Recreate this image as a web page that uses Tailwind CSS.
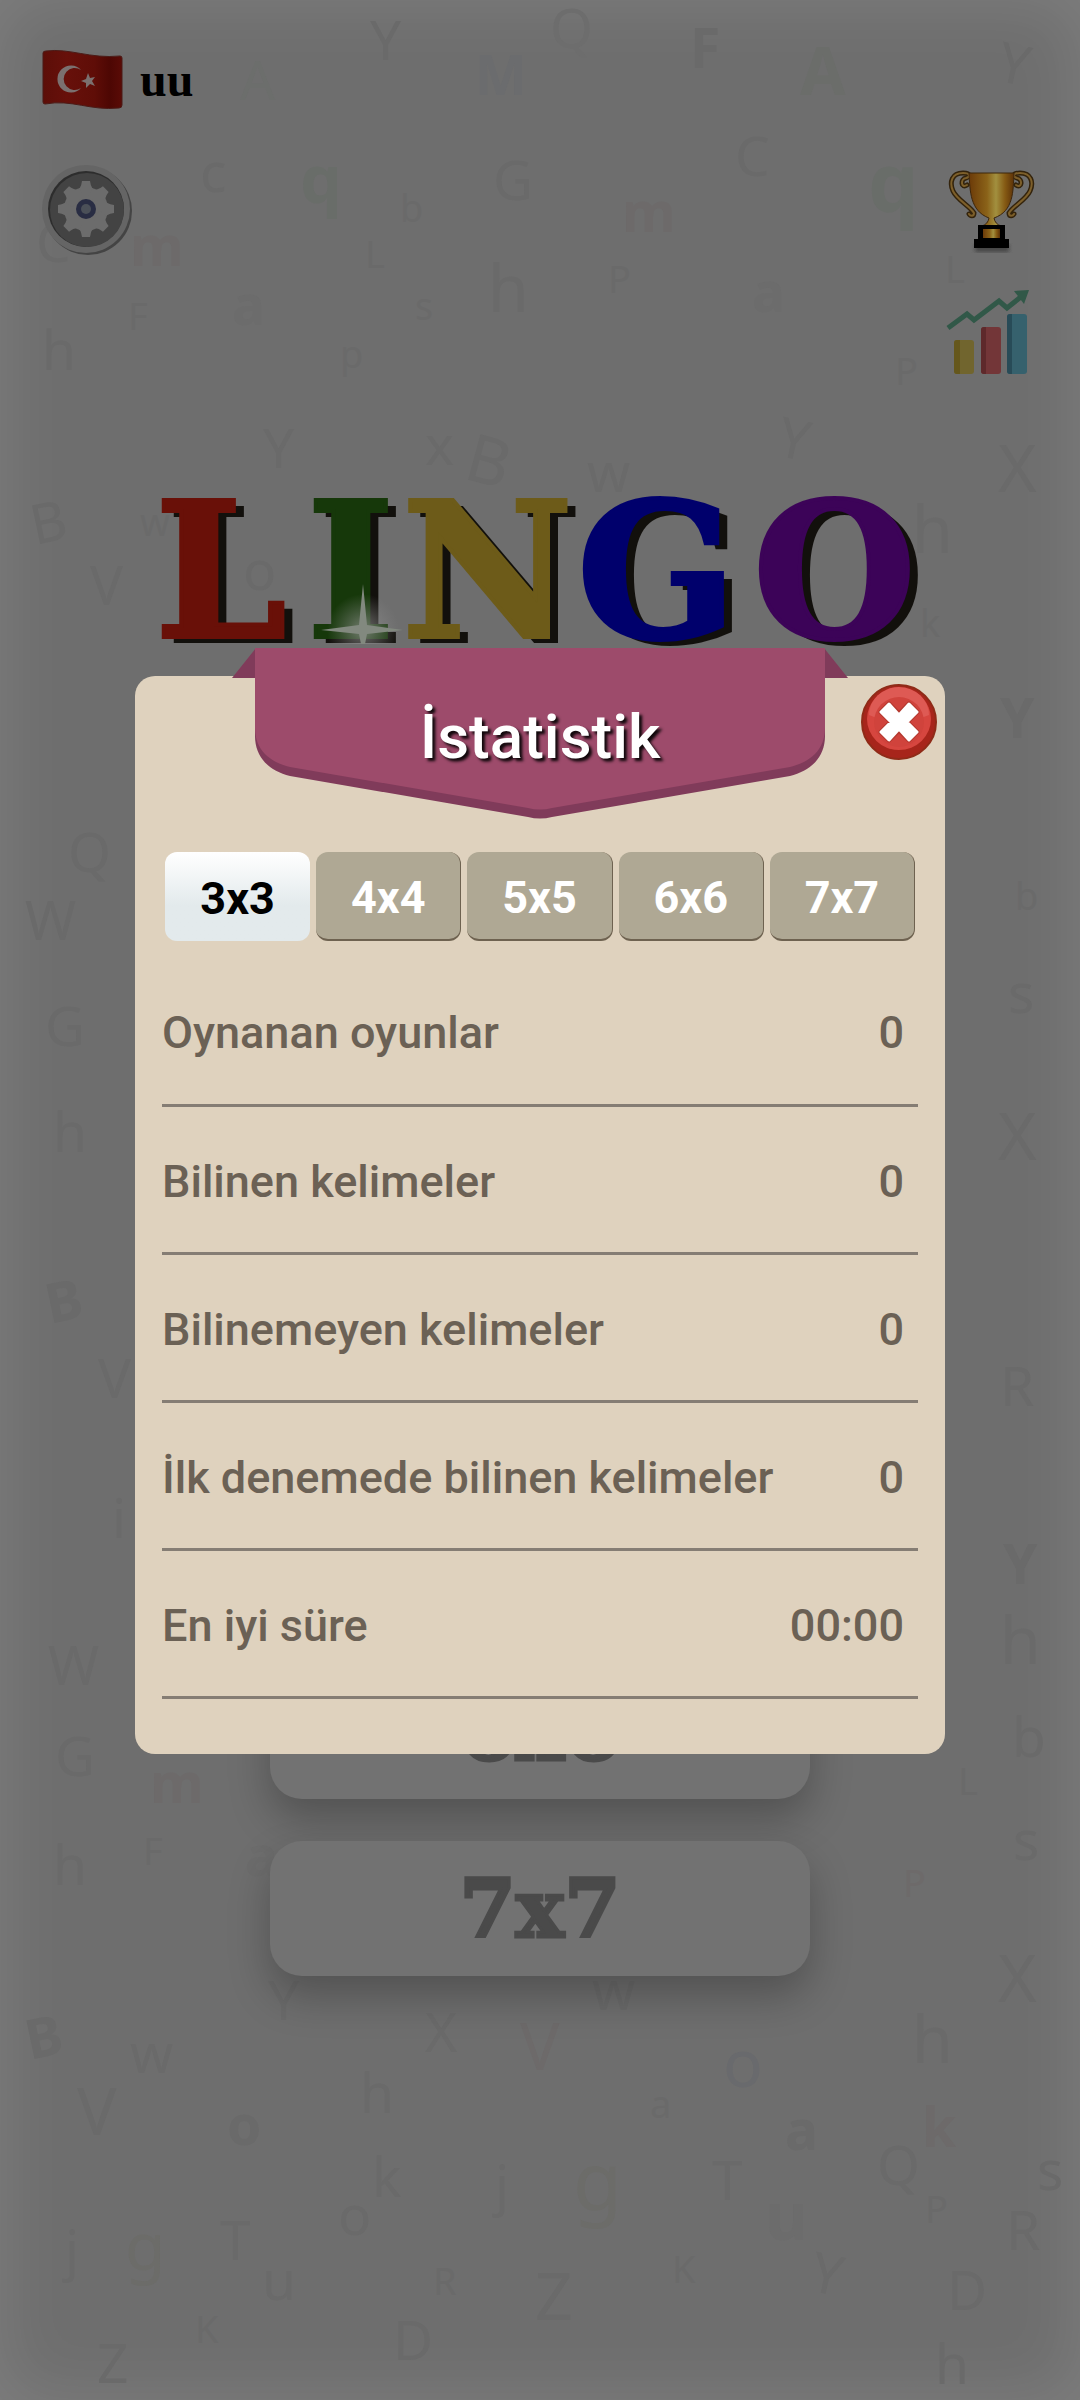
<!DOCTYPE html>
<html lang="tr">

<head>
  <meta charset="UTF-8" />
  <meta name="viewport" content="width=device-width, initial-scale=1.0" />
  <title>Lingo - İstatistik</title>
  <script src="https://cdn.jsdelivr.net/npm/@tailwindcss/browser@4"></script>
</head>

<body class="bg-[#6e6e6e] font-['Roboto',sans-serif]">

  <!-- Game menu -->
  <main class="relative min-h-screen overflow-hidden flex flex-col shadow-[inset_0_0_70px_rgba(255,255,255,0.12)]">

    <!-- Faint letters scattered over the background -->
    <svg class="absolute inset-0 w-full h-full" viewBox="0 0 1080 2400" preserveAspectRatio="xMidYMin slice" aria-hidden="true"
      font-family="Noto Sans, sans-serif" font-size="55" fill="#6a6a6a">
      <text x="370" y="60">Y</text>
      <text x="300" y="203" font-size="66" font-weight="bold" fill="#696d69">q</text>
      <text x="200" y="192">c</text>
      <text x="493" y="200">G</text>
      <text x="400" y="222" font-size="38">b</text>
      <text x="130" y="266" font-weight="bold" fill="#6d6a6a">m</text>
      <text x="365" y="268" font-size="38">L</text>
      <text x="488" y="312" font-size="66">h</text>
      <text x="232" y="325" font-weight="bold" fill="#6c6c6c">a</text>
      <text x="415" y="320" font-size="38">s</text>
      <text x="128" y="330" font-size="38">F</text>
      <text x="42" y="370">h</text>
      <text x="340" y="368" font-size="38">p</text>
      <text x="475" y="95" font-weight="bold" fill="#6b6c6e">M</text>
      <text x="240" y="100" fill="#6c6e6c">A</text>
      <text x="36" y="262">C</text>
      <text x="550" y="48" fill="#6d6d6d">Q</text>
      <text x="690" y="68" font-weight="bold">F</text>
      <text x="800" y="95" font-size="66" font-weight="bold" fill="#6b6d6a">A</text>
      <text x="995" y="80" transform="rotate(12 995 80)">Y</text>
      <text x="735" y="176">C</text>
      <text x="868" y="212" font-size="80" font-weight="bold" fill="#696d69">q</text>
      <text x="622" y="232" font-weight="bold" fill="#6d6a6a">m</text>
      <text x="608" y="293" font-size="38">P</text>
      <text x="752" y="312" font-weight="bold" fill="#6c6c6c">a</text>
      <text x="895" y="385" font-size="38">P</text>
      <text x="945" y="283" font-size="38">L</text>
      <text x="263" y="468">Y</text>
      <text x="425" y="465">x</text>
      <text x="462" y="478" font-size="66" transform="rotate(15 462 478)">B</text>
      <text x="775" y="455" transform="rotate(12 775 455)">Y</text>
      <text x="587" y="492">w</text>
      <text x="998" y="492" font-size="66">X</text>
      <text x="35" y="545" transform="rotate(-12 35 545)">B</text>
      <text x="140" y="536" font-size="38">w</text>
      <text x="90" y="605">V</text>
      <text x="243" y="590">o</text>
      <text x="912" y="553" font-size="66">h</text>
      <text x="920" y="637" font-size="38">k</text>
      <text x="1000" y="738" font-weight="bold">Y</text>
      <text x="68" y="872">Q</text>
      <text x="25" y="940">W</text>
      <text x="1015" y="910" font-size="38">b</text>
      <text x="45" y="1046">G</text>
      <text x="1008" y="1013">s</text>
      <text x="53" y="1152">h</text>
      <text x="998" y="1160" font-size="66">X</text>
      <text x="50" y="1324" font-weight="bold" transform="rotate(-12 50 1324)">B</text>
      <text x="98" y="1398">V</text>
      <text x="1000" y="1406">R</text>
      <text x="112" y="1538">i</text>
      <text x="1003" y="1584" font-weight="bold">Y</text>
      <text x="48" y="1685">W</text>
      <text x="1000" y="1664" font-size="66">h</text>
      <text x="55" y="1776">G</text>
      <text x="150" y="1803" font-weight="bold" fill="#6d6a6a">m</text>
      <text x="1012" y="1757">b</text>
      <text x="958" y="1795" font-size="38">L</text>
      <text x="53" y="1885">h</text>
      <text x="143" y="1865" font-size="38">F</text>
      <text x="245" y="1876" font-weight="bold" fill="#6c6c6c">a</text>
      <text x="1013" y="1860">s</text>
      <text x="903" y="1897" font-size="38" fill="#6d6a6a">P</text>
      <text x="998" y="2002" font-size="66">X</text>
      <text x="30" y="2060" font-weight="bold" transform="rotate(-12 30 2060)">B</text>
      <text x="130" y="2073">w</text>
      <text x="268" y="2020">Y</text>
      <text x="592" y="2010">w</text>
      <text x="425" y="2052">X</text>
      <text x="520" y="2070" font-size="66" fill="#6d6a6a">V</text>
      <text x="912" y="2063" font-size="66">h</text>
      <text x="723" y="2087" font-size="66" fill="#696a6d">o</text>
      <text x="77" y="2135" font-size="66">V</text>
      <text x="360" y="2113">h</text>
      <text x="227" y="2145" font-weight="bold">o</text>
      <text x="650" y="2118" font-size="38">a</text>
      <text x="785" y="2150" font-weight="bold">a</text>
      <text x="922" y="2147" font-weight="bold" fill="#6d6a6a">k</text>
      <text x="372" y="2197">k</text>
      <text x="495" y="2205">j</text>
      <text x="573" y="2210" font-size="80" fill="#6c6c69">g</text>
      <text x="712" y="2200">T</text>
      <text x="877" y="2185">Q</text>
      <text x="765" y="2240" font-size="66" font-weight="bold" fill="#6c6c6c">u</text>
      <text x="1037" y="2190">s</text>
      <text x="925" y="2223" font-size="38">P</text>
      <text x="1006" y="2250">R</text>
      <text x="338" y="2235">o</text>
      <text x="65" y="2270">j</text>
      <text x="125" y="2270" font-size="66" fill="#6c6c69">g</text>
      <text x="220" y="2260">T</text>
      <text x="262" y="2300">u</text>
      <text x="433" y="2295" font-size="38">R</text>
      <text x="535" y="2320" font-size="66">Z</text>
      <text x="672" y="2283" font-size="38">K</text>
      <text x="808" y="2290" transform="rotate(12 808 2290)">Y</text>
      <text x="947" y="2310">D</text>
      <text x="195" y="2343" font-size="38">K</text>
      <text x="393" y="2360">D</text>
      <text x="97" y="2383">Z</text>
      <text x="935" y="2384">h</text>
    </svg>

    <!-- Player and shortcuts -->
    <header class="relative px-10 pt-12">
      <div class="flex items-center gap-4 h-16">
        <svg class="w-[84px] h-16" viewBox="0 0 84 64" aria-label="Türkiye">
          <defs>
            <linearGradient id="flagShade" x1="0" x2="1">
              <stop offset="0" stop-color="#5c0e08" />
              <stop offset="0.3" stop-color="#67100a" />
              <stop offset="0.65" stop-color="#5f0d07" />
              <stop offset="0.85" stop-color="#4d0703" />
              <stop offset="1" stop-color="#5a0b06" />
            </linearGradient>
          </defs>
          <path d="M3 5Q3 3 6 3C30 0 50 11 80 8Q82 8 82 10V57Q82 60 79 60C50 63 32 51 5 56Q3 56 3 54Z" fill="url(#flagShade)" stroke="#4b1b17" />
          <path d="M41 22A13.500 13.500 0 1 0 41 40A11 11 0 1 1 41 22Z" fill="#7b706f" />
          <path d="M48 25l2 5 5-1-3 4 3 5-5-2-4 4v-5l-5-2 5-2z" fill="#7b706f" />
        </svg>
        <span class="font-['Liberation_Serif',serif] font-bold text-5xl text-black">uu</span>
      </div>

      <div class="flex items-start justify-between mt-[52px]">
        <button type="button" aria-label="Ayarlar">
          <svg class="w-[92px] h-[92px]" viewBox="0 0 92 92">
            <circle cx="48" cy="47" r="44" fill="#444" />
            <circle cx="46" cy="45" r="44" fill="#656565" />
            <circle cx="46" cy="45" r="38" fill="#2d2d2d" />
            <circle cx="47" cy="46" r="37" fill="#434343" />
            <circle cx="46" cy="45" r="22" fill="#6c6c6c" />
            <g fill="#6c6c6c">
              <path id="tooth" d="M36 27Q41 25 42 17H50Q51 25 56 27L54 34H38Z" />
              <use href="#tooth" transform="rotate(45 46 45)" />
              <use href="#tooth" transform="rotate(90 46 45)" />
              <use href="#tooth" transform="rotate(135 46 45)" />
              <use href="#tooth" transform="rotate(180 46 45)" />
              <use href="#tooth" transform="rotate(225 46 45)" />
              <use href="#tooth" transform="rotate(270 46 45)" />
              <use href="#tooth" transform="rotate(315 46 45)" />
            </g>
            <circle cx="46" cy="45" r="10" fill="#292d43" />
            <circle cx="46" cy="45" r="5" fill="#4b5058" />
          </svg>
        </button>

        <div class="flex flex-col gap-8 pr-1">
          <button type="button" aria-label="Sıralama">
            <svg class="w-[90px] h-[90px]" viewBox="0 0 90 90">
              <defs>
                <linearGradient id="cupGold" x1="0" x2="1">
                  <stop offset="0" stop-color="#6b3a08" />
                  <stop offset="0.4" stop-color="#8a6218" />
                  <stop offset="0.6" stop-color="#a2903f" />
                  <stop offset="0.8" stop-color="#855a13" />
                  <stop offset="1" stop-color="#5c3107" />
                </linearGradient>
                <filter id="cupBlur"><feGaussianBlur stdDeviation="2" /></filter>
              </defs>
              <rect x="29" y="80" width="34" height="8" fill="#444" filter="url(#cupBlur)" />
              <g id="handle" fill="none" stroke-linecap="round">
                <path d="M21 21C15 25 14 15 20 14C24 13 25 9 17 9C6 9 3 18 7 27C11 36 24 42 28 49C28 53 24 52 23 50" stroke="#33230c" stroke-width="5" />
                <path d="M21 21C15 25 14 15 20 14C24 13 25 9 17 9C6 9 3 18 7 27C11 36 24 42 28 49C28 53 24 52 23 50" stroke="#7d5f2a" stroke-width="2" />
              </g>
              <use href="#handle" transform="matrix(-1 0 0 1 91 0)" />
              <path d="M23 9H68C67 27 68 47 48 54Q49 60 55 62H36Q42 60 43 54C24 47 24 27 23 9Z" fill="url(#cupGold)" stroke="#3d260b" stroke-width="1" />
              <path d="M32 61H59V75H63V84H28V75H32Z" fill="#000" />
              <rect x="37" y="65" width="17" height="9" fill="url(#cupGold)" />
            </svg>
          </button>
          <button type="button" aria-label="İstatistik">
            <svg class="w-[90px] h-[90px]" viewBox="0 0 90 90">
              <path d="M2 42L21 28L28 34L53 15L61 22L76 10" fill="none" stroke="#315848" stroke-width="5" />
              <path d="M68 5L83 4L78 18Z" fill="#315848" />
              <rect x="8" y="54" width="20" height="34" rx="3" fill="#71652e" />
              <path d="M11 54H14V88H11Q8 88 8 85V57Q8 54 11 54Z" fill="#65571c" />
              <rect x="35" y="41" width="20" height="47" rx="3" fill="#733638" />
              <path d="M38 41H40V88H38Q35 88 35 85V44Q35 41 38 41Z" fill="#5e292b" />
              <rect x="61" y="28" width="20" height="60" rx="3" fill="#36616d" />
              <path d="M64 28H66V88H64Q61 88 61 85V31Q61 28 64 28Z" fill="#284b57" />
            </svg>
          </button>
        </div>
      </div>
    </header>

    <!-- Logo -->
    <h1 class="relative mx-auto mt-[100px] flex w-[776px] pl-[3px] font-['DejaVu_Serif',serif] font-bold text-[187px] leading-[190px] text-shadow-[10px_6px_0_#12100c] [-webkit-text-stroke:4px_currentColor]">
      <span class="w-[152px] text-[#691008]">L</span>
      <span class="relative w-[95px] text-[#16380a]">I
        <svg class="absolute left-3 top-[108px] w-[88px] h-[60px]" viewBox="0 0 88 60" aria-hidden="true">
          <defs>
            <radialGradient id="glow">
              <stop offset="0" stop-color="#999" stop-opacity="0.7" />
              <stop offset="1" stop-color="#888" stop-opacity="0" />
            </radialGradient>
          </defs>
          <circle cx="44" cy="46" r="36" fill="url(#glow)" />
          <path d="M44 0L48 41L84 46L48 50L46 60H42L40 50L2 46L40 41Z" fill="#82897f" />
        </svg>
      </span>
      <span class="w-[175px] text-[#6d5b19]">N</span>
      <span class="w-[176px] text-[#00006c]">G</span>
      <span class="text-[#3c0358]">O</span>
    </h1>

    <nav class="relative mx-auto mt-[467px] mb-24 w-1/2 flex flex-col gap-[42px] font-['DejaVu_Serif',serif] font-bold text-[81px] leading-none text-[#4a4a4a] [-webkit-text-stroke:3px_currentColor]">
      <button type="button" class="h-[135px] rounded-[32px] bg-[#727272] shadow-[0_20px_40px_rgba(0,0,0,0.25)]">3x3</button>
      <button type="button" class="h-[135px] rounded-[32px] bg-[#727272] shadow-[0_20px_40px_rgba(0,0,0,0.25)]">4x4</button>
      <button type="button" class="h-[135px] rounded-[32px] bg-[#727272] shadow-[0_20px_40px_rgba(0,0,0,0.25)]">5x5</button>
      <button type="button" class="h-[135px] rounded-[32px] bg-[#727272] shadow-[0_20px_40px_rgba(0,0,0,0.25)]">6x6</button>
      <button type="button" class="h-[135px] rounded-[32px] bg-[#727272] shadow-[0_20px_40px_rgba(0,0,0,0.25)]">7x7</button>
    </nav>
  </main>

  <!-- Statistics dialog -->
  <div class="fixed inset-0 pt-0.5 flex items-center justify-center">
    <section role="dialog" aria-labelledby="dialogTitle" class="relative w-3/4 pt-7">

      <div class="rounded-[20px] bg-[#dfd2be] px-[27px] pt-44 pb-[55px]">
        <div role="tablist" class="grid grid-cols-5 gap-[6px] px-[3px] text-[45px] font-bold leading-none text-white">
          <button type="button" role="tab" aria-selected="true" class="h-[89px] pt-1 rounded-xl bg-linear-to-b from-white to-[#e3eaec] to-60% text-black">3x3</button>
          <button type="button" role="tab" class="h-[89px] pt-1 rounded-xl bg-[#afa894] border-b-2 border-r border-[#6e6250]">4x4</button>
          <button type="button" role="tab" class="h-[89px] pt-1 rounded-xl bg-[#afa894] border-b-2 border-r border-[#6e6250]">5x5</button>
          <button type="button" role="tab" class="h-[89px] pt-1 rounded-xl bg-[#afa894] border-b-2 border-r border-[#6e6250]">6x6</button>
          <button type="button" role="tab" class="h-[89px] pt-1 rounded-xl bg-[#afa894] border-b-2 border-r border-[#6e6250]">7x7</button>
        </div>

        <table class="mt-4 w-full text-[45px] leading-none text-[#6b6155]">
          <tbody>
            <tr class="h-[148px] border-b-3 border-[#857d74]">
              <th scope="row" class="pt-1 text-left font-medium">Oynanan oyunlar</th>
              <td class="pt-1 pr-[14px] text-right font-medium">0</td>
            </tr>
            <tr class="h-[148px] border-b-3 border-[#857d74]">
              <th scope="row" class="pt-1 text-left font-medium">Bilinen kelimeler</th>
              <td class="pt-1 pr-[14px] text-right font-medium">0</td>
            </tr>
            <tr class="h-[148px] border-b-3 border-[#857d74]">
              <th scope="row" class="pt-1 text-left font-medium">Bilinemeyen kelimeler</th>
              <td class="pt-1 pr-[14px] text-right font-medium">0</td>
            </tr>
            <tr class="h-[148px] border-b-3 border-[#857d74]">
              <th scope="row" class="pt-1 text-left font-medium">İlk denemede bilinen kelimeler</th>
              <td class="pt-1 pr-[14px] text-right font-medium">0</td>
            </tr>
            <tr class="h-[148px] border-b-3 border-[#857d74]">
              <th scope="row" class="pt-1 text-left font-medium">En iyi süre</th>
              <td class="pt-1 pr-[14px] text-right font-medium">00:00</td>
            </tr>
          </tbody>
        </table>
      </div>

      <!-- Ribbon over the top edge -->
      <div class="absolute inset-x-0 top-0 flex justify-center">
        <svg class="w-[616px] h-[172px]" viewBox="0 0 616 172" aria-hidden="true">
          <path d="M24 0L0 30H24ZM592 0L616 30H592Z" fill="#803b5a" />
          <path d="M23 60V88C23 110 38 123 58 128L296 169Q308 172 320 169L558 128C578 123 593 110 593 88V60Z" fill="#803b5a" />
          <path d="M23 0H593V80C593 102 578 114 558 119L320 160Q308 163 296 160L58 119C38 114 23 102 23 80Z" fill="#9d4b6b" />
        </svg>
        <h2 id="dialogTitle" class="absolute top-[58px] text-[62px] font-medium leading-none text-white text-shadow-[3px_3px_3px_rgba(0,0,0,0.9)]">İstatistik</h2>
      </div>

      <button type="button" aria-label="Kapat" class="absolute right-2 top-9">
        <svg class="w-[76px] h-[76px]" viewBox="0 0 76 76">
          <circle cx="38" cy="38" r="37" fill="#a7251b" stroke="#8f2b18" stroke-width="2" />
          <ellipse cx="38" cy="35" rx="32" ry="31" fill="#d6463f" />
          <path d="M8 31A30 28 0 0 1 68 31Q38 44 8 31Z" fill="#de5a54" />
          <circle cx="38" cy="38" r="25" fill="#d0433c" />
          <g stroke-linejoin="round">
            <path id="cross" d="M28 20L38 30L48 20L56 28L46 38L56 48L48 56L38 46L28 56L20 48L30 38L20 28Z" fill="#b5392f" stroke="#b5392f" stroke-width="5" />
            <path d="M28 20L38 31L48 20L56 28L46 38L56 48L48 56L38 45L28 56L20 48L30 38L20 28Z" fill="#fff" stroke="#fff" stroke-width="3" />
          </g>
        </svg>
      </button>
    </section>
  </div>

</body>

</html>
